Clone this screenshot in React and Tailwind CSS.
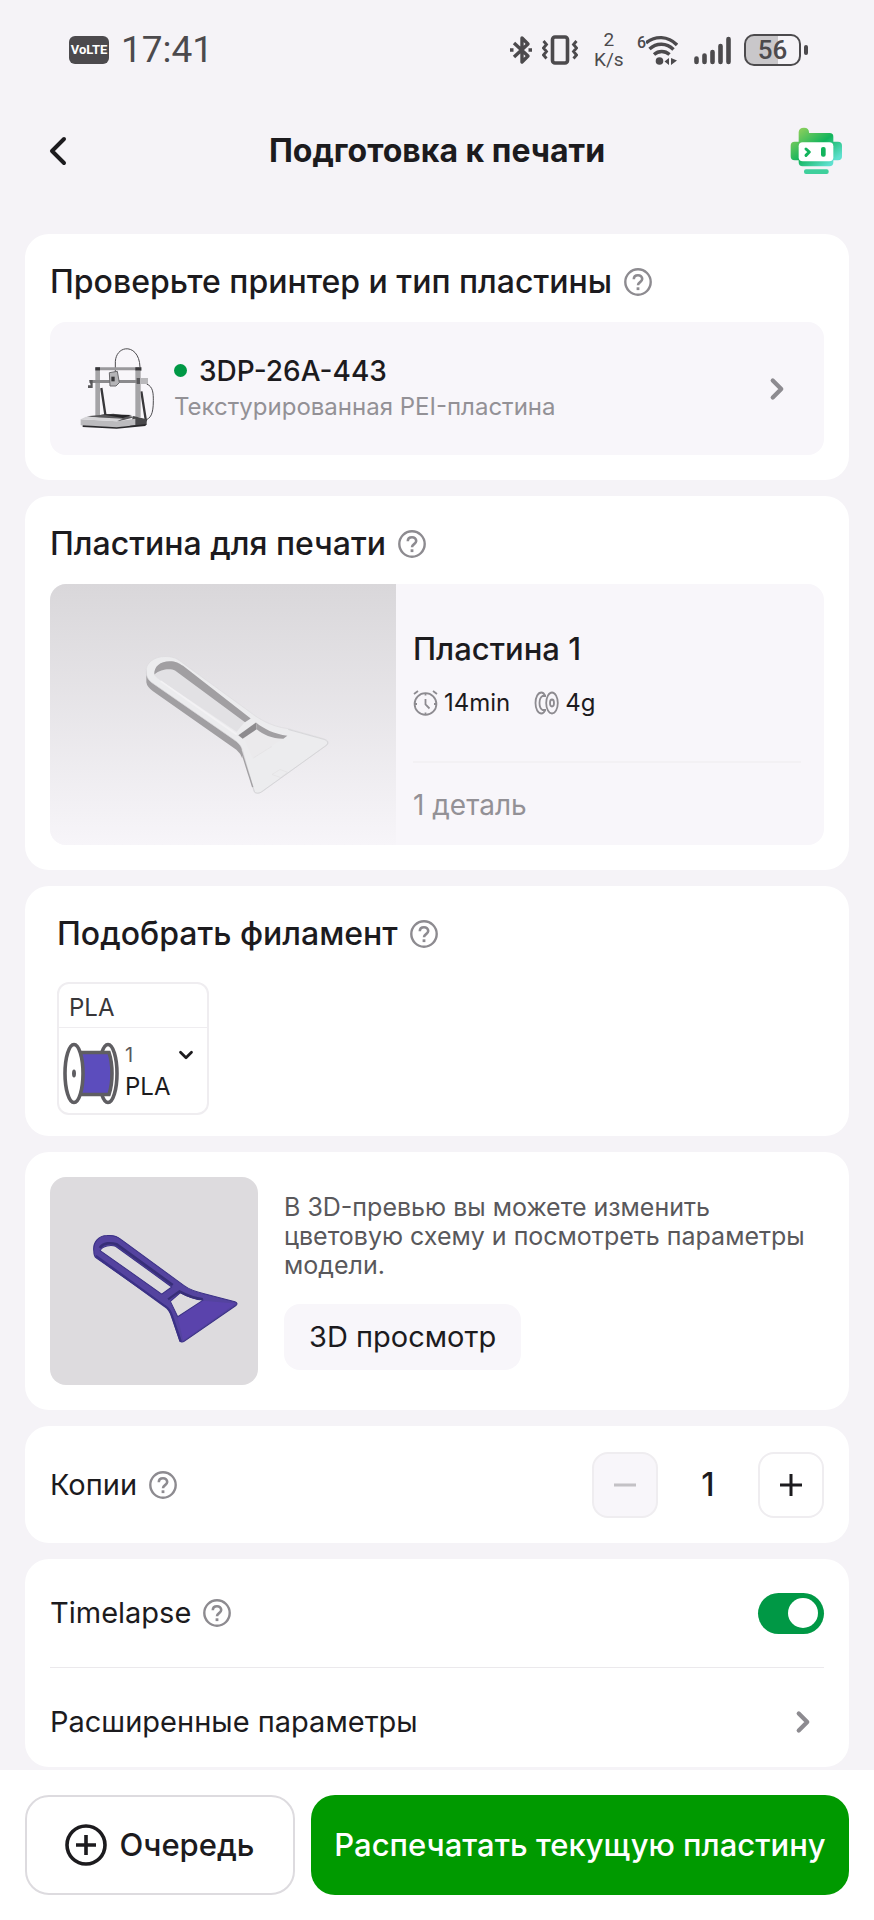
import React, { useState } from 'react';
import { ChevronDown, ChevronLeft, ChevronRight } from 'lucide-react';

function HelpButton({ topic }) {
    return (
        <button aria-label={`Справка: ${topic}`} className="shrink-0">
            <svg width="28" height="28" viewBox="0 0 28 28" fill="none" stroke="#8d8b90" strokeWidth="2.400">
                <circle cx="14" cy="14" r="12.700" />
                <path d="M9.800 11.200c0-2.600 1.900-4 4.200-4s4.200 1.500 4.200 3.800c0 3-4.200 3.200-4.200 6.200" strokeWidth="2.600" />
                <rect x="12.600" y="19.300" width="2.800" height="2.800" fill="#8d8b90" stroke="none" />
            </svg>
        </button>
    );
}

function Card({ className = '', children }) {
    return <section className={`rounded-3xl bg-white px-[25px] ${className}`}>{children}</section>;
}

function CardTitle({ children }) {
    return (
        <div className="flex items-center gap-3">
            <h2 className="text-[32px] leading-10 font-[450] whitespace-nowrap">{children}</h2>
            <HelpButton topic={children} />
        </div>
    );
}

function StatusBar() {
    return (
        <div className="flex h-[100px] items-center justify-between pr-[66px] pl-[69px] text-[#4c4a4d]">
            <div className="flex items-center gap-3">
                <span className="flex h-7 w-10 items-center justify-center rounded-md bg-[#4c4a4d] font-[Roboto] text-[13px] font-bold text-white">
                    VoLTE
                </span>
                <span className="font-[Roboto] text-[37px] leading-10">17:41</span>
            </div>
            <div className="flex items-center">
                <svg width="22" height="30" viewBox="0 0 22 30" fill="none" stroke="currentColor" strokeWidth="3.400" strokeLinejoin="round">
                    <path d="M4 8l14 13-6 6V3l6 6L4 22" />
                    <path d="M0 15h3.500M18.500 15H22" />
                </svg>
                <svg className="ml-[10px]" width="36" height="30" viewBox="0 0 36 30" fill="none" stroke="currentColor">
                    <rect x="10.500" y="2" width="15" height="26" rx="2.500" strokeWidth="3.600" />
                    <path d="M1.500 6l3 3.500-3 3.500 3 3.500-3 3.500 3 3.500M34.500 6l-3 3.500 3 3.500-3 3.500 3 3.500-3 3.500" strokeWidth="2.800" />
                </svg>
                <span className="ml-[15px] flex w-8 flex-col text-center font-[Roboto] text-[19px] leading-5">
                    <span>2</span>
                    <span>K/s</span>
                </span>
                <div className="ml-3 flex items-start">
                    <span className="font-[Roboto] text-base leading-4 font-medium">6</span>
                    <svg width="32" height="30" viewBox="0 0 32 30" fill="none" stroke="currentColor" strokeWidth="3.400">
                        <path d="M0 8c9-7.500 22-7.500 31 2M3.500 14c7-6.500 17-6.500 24 .5M8 19.500c4.500-4 11-4 15.500 0" />
                        <circle cx="13.500" cy="26" r="3.800" fill="currentColor" stroke="none" />
                        <path d="M23 23v7l-4.500-3.500zM25 23v7l6-4.500z" fill="currentColor" stroke="none" />
                    </svg>
                </div>
                <svg className="ml-4" width="38" height="30" viewBox="0 0 38 30" stroke="currentColor" strokeWidth="4.600" strokeLinecap="round">
                    <path d="M2.500 23.500V27M10.500 20.500V27M18.500 17V27M26.500 11V27M34.500 4V27" />
                </svg>
                <div className="ml-3 flex items-center gap-[3px]">
                    <span className="flex h-8 w-[57px] items-center justify-center rounded-[10px] border-2 border-[#4c4a4d] bg-linear-to-r from-[#c9c7ca] from-60% to-transparent to-60% font-[Roboto] text-[26px] leading-7 font-medium">
                        56
                    </span>
                    <span className="h-[10px] w-1 rounded-xs bg-[#4c4a4d]"></span>
                </div>
            </div>
        </div>
    );
}

function RobotIcon() {
    return (
        <svg width="52" height="48" viewBox="0 0 156 144">
            <defs>
                <linearGradient id="robot" x1="0" y1="0" x2="1" y2="1">
                    <stop offset="0.100" stopColor="#8ccf5c" />
                    <stop offset="0.500" stopColor="#12b45c" />
                    <stop offset="0.850" stopColor="#5fe0cf" />
                </linearGradient>
            </defs>
            <path
                fill="url(#robot)"
                d="M26 16q0-14 16-14 15 0 15 14v2h62q11 0 11 11v15h14q12 0 12 12v32q0 12-12 12h-14v6q0 12-12 12H38q-12 0-12-12v-6H14q-12 0-12-12V56q0-12 12-12h12z"
            />
            <rect x="26" y="46" width="104" height="57" rx="12" fill="#fff" />
            <path d="M48 66l10 9-10 10" fill="none" stroke="#12b45c" strokeWidth="9" strokeLinecap="round" strokeLinejoin="round" />
            <rect x="93" y="60" width="14" height="29" rx="6" fill="#12b45c" />
            <rect x="42" y="127" width="74" height="14" rx="6" fill="#3fcf9c" />
        </svg>
    );
}

function PrinterImage() {
    return (
        <svg className="shrink-0" width="74" height="81" viewBox="0 0 222 243" fill="none">
            <path d="M106 75V40C110-12 178-14 180 58" stroke="#4c4b4e" strokeWidth="3" />
            <path d="M200 108c20 8 20 30 20 50 0 40-8 54-26 59" stroke="#4c4b4e" strokeWidth="3" />
            <path d="M64 120l12 80M184 130l14 90" stroke="#38373a" strokeWidth="7" />
            <path d="M46 58h138v9H46z" fill="#9a999c" />
            <path d="M46 58h14v10H46zM166 58h18v10h-18z" fill="#38373a" />
            <path d="M46 68h14v136H46zM166 68h16v140h-16z" fill="#a5a4a7" />
            <path d="M28 96h154v9H28z" fill="#8b8a8d" />
            <path d="M28 96h10v24H24v-8h8zM170 90h34v18h-34z" fill="#59585b" />
            <path d="M180 90h24v18h-24z" fill="#b9b8bb" />
            <path d="M88 74l24-4 6 34-10 10H90z" fill="#b5b4b7" stroke="#6a696c" strokeWidth="3" />
            <path d="M94 86h10v14H94z" fill="#38373a" />
            <path d="M20 205l80-8 66 10-46 12z" fill="#58575a" />
            <path d="M60 198l96 3-28 9z" fill="#252427" />
            <path d="M160 204l40 10v16l-52 6z" fill="#49484b" />
            <path d="M2 214l108 6 56-8v19l-56 8-108-7z" fill="#bcbbbe" />
            <path d="M2 214l16-8 110 6-18 8z" fill="#d6d5d8" />
            <path d="M8 232l102 6 90-10-4 6-86 8-102-5z" fill="#29282b" />
        </svg>
    );
}

// Unpainted model: light top face, darker extruded walls
function PlatePreview() {
    return (
        <svg className="block h-full w-full" viewBox="0 0 1038 780">
            <path
                d="M289 255v38q2 14 20 27l250 176q12 10 18 26l-2-44L310 290z"
                fill="#a19fa2"
            />
            <path
                d="M289 262c-4-26 24-46 56-46 26 0 36 6 54 20l203 148c20 16 60 42 110 48l110 31c14 5 14 12 8 18L636 622c-10 6-20 6-24 0l-34-124c-6-18-14-24-28-34L305 294c-12-10-16-18-16-32z"
                fill="#ececee"
                stroke="#dcdbde"
                strokeWidth="2"
            />
            <path d="M313 272c-2-24 18-42 46-42 18 0 28 6 40 14l203 158-17 10-25 30-237-160z" fill="#e2e1e4" />
            <path d="M313 270c-2-24 18-40 46-40 18 0 28 6 40 14l203 158-17 11-210-155c-12-6-42-6-62 12z" fill="#a19fa2" />
            <path d="M332 290l228 160" stroke="#f3f2f4" strokeWidth="5" />
            <path d="M565 452l53-38c24 20 54 34 94 40l-104 68-23-54z" fill="#ebeaec" />
            <path d="M565 452l53-38 2 20-42 29z" fill="#8d8b8e" />
            <path d="M618 414c24 20 54 34 94 40l-12 9c-36-2-60-12-80-29z" fill="#a19fa2" />
            <path d="M611 520l54-34M666 570l24-15 22 8-20 16z" stroke="#e2e1e3" strokeWidth="2" fill="none" />
            <path d="M576 498l37 122c2 6 12 8 20 3l196-140c8-6 4-14-6-18l-108-30" stroke="#cfced1" strokeWidth="2" fill="none" />
            <path d="M574 500l34 108" stroke="#a19fa2" strokeWidth="4" />
        </svg>
    );
}

function ModelPreview() {
    return (
        <svg className="block h-full w-full" viewBox="0 0 622 622">
            <path
                fillRule="evenodd"
                fill="#54439f"
                stroke="#3b3186"
                strokeWidth="3"
                strokeLinejoin="round"
                d="M131 222c-4-26 14-47 40-47 18-2 30 2 42 12l188 138c16 12 38 19 60 24l92 24c8 3 8 8 2 12L402 491c-6 4-12 3-14-2l-24-72c-4-14-8-22-16-28L138 242c-5-4-7-10-7-20zM150 220l184 130 30-21-168-122c-14-4-38-2-46 13zM360 372l22 46 76-50c-26-2-46-10-68-22z"
            />
            <path d="M137 236l206 150c14 8 20 22 24 36l24 70" fill="none" stroke="#3b3186" strokeWidth="7" />
            <path d="M149 212c10-16 34-16 50-11l168 122" fill="none" stroke="#372e78" strokeWidth="8" />
            <path d="M353 366l34-24c22 12 44 21 70 23" fill="none" stroke="#372e78" strokeWidth="7" />
            <path d="M382 421l76-51 97 8-157 111z" fill="#5a43ac" />
        </svg>
    );
}

function ClockIcon() {
    return (
        <svg width="25" height="26" viewBox="0 0 25 26" fill="none" stroke="#8d8b90" strokeWidth="1.800">
            <circle cx="12.500" cy="14" r="10.900" />
            <path d="M12.500 9v5.500l4 4M1 4l4-3M24 4l-4-3M12.500 3v2.500M12.500 22.500V25M1.500 14H4M21 14h2.500" />
        </svg>
    );
}

function SpoolOutlineIcon() {
    return (
        <svg width="25" height="24" viewBox="0 0 25 24" fill="none" stroke="#8d8b90" strokeWidth="1.800">
            <path d="M11 4.500C10 2.500 8.800 1.500 7.500 1.500 4 1.500 1.500 6 1.500 12s2.500 10.500 6 10.500c1.300 0 2.500-1 3.500-3" />
            <path d="M12 5H8.500C6 6.500 5.500 9 5.500 12s.5 5.500 3 7H12" />
            <ellipse cx="18" cy="12" rx="5.800" ry="10.500" />
            <ellipse cx="18" cy="12" rx="2" ry="3.500" />
        </svg>
    );
}

function FilamentSpool() {
    return (
        <svg className="shrink-0" width="56" height="63" viewBox="0 0 56 63" stroke="#5f5e62" strokeWidth="3.600">
            <ellipse cx="45" cy="31.500" rx="9" ry="29" fill="#fff" />
            <path d="M16 10.500h30c4 12 4 30 0 42H16z" fill="#5c4dbd" />
            <ellipse cx="11" cy="31.500" rx="9" ry="29" fill="#fff" />
            <ellipse cx="11" cy="31.500" rx="2" ry="4" fill="#5f5e62" stroke="none" />
        </svg>
    );
}

export default function App() {
    const [copies, setCopies] = useState(1);
    const [timelapse, setTimelapse] = useState(true);

    return (
        <div className="flex min-h-screen flex-col bg-[#f5f3f7] font-[Inter,'Noto_Sans',sans-serif] text-[#1c1b1e]">
            <StatusBar />

            <header className="grid h-[102px] grid-cols-[52px_1fr_52px] items-center px-8">
                <button aria-label="Назад" className="flex justify-center">
                    <ChevronLeft size={48} strokeWidth={2} />
                </button>
                <h1 className="text-center text-[32px] leading-10 font-bold">Подготовка к печати</h1>
                <button aria-label="Помощник">
                    <RobotIcon />
                </button>
            </header>

            <main className="mt-8 flex flex-1 flex-col gap-4 px-[25px]">
                <Card className="pt-7 pb-[25px]">
                    <CardTitle>Проверьте принтер и тип пластины</CardTitle>
                    <button className="mt-5 flex h-[133px] w-full items-center rounded-2xl bg-[#f8f6fa] px-[30px] text-left">
                        <PrinterImage />
                        <span className="ml-5 flex flex-1 flex-col">
                            <span className="flex items-center gap-3 text-[28px] leading-9 font-[450]">
                                <span className="size-[13px] rounded-full bg-[#009845]"></span>
                                3DP-26A-443
                            </span>
                            <span className="text-2xl leading-9 text-[#939196]">Текстурированная PEI-пластина</span>
                        </span>
                        <ChevronRight size={34} strokeWidth={3} color="#8d8b90" />
                    </button>
                </Card>

                <Card className="pt-7 pb-[25px]">
                    <CardTitle>Пластина для печати</CardTitle>
                    <div className="mt-5 flex h-[261px] overflow-hidden rounded-2xl bg-[#f8f6fa]">
                        <div className="w-[346px] bg-linear-to-b from-[#d9d7da] to-[#f7f5f9]">
                            <PlatePreview />
                        </div>
                        <div className="flex flex-1 flex-col pt-[45px] pr-[23px] pl-[17px]">
                            <h3 className="text-[31px] leading-10 font-[450]">Пластина 1</h3>
                            <div className="mt-4 flex items-center gap-6 text-2xl leading-9">
                                <span className="flex items-center gap-[6px]">
                                    <ClockIcon />
                                    14min
                                </span>
                                <span className="flex items-center gap-[6px]">
                                    <SpoolOutlineIcon />
                                    4g
                                </span>
                            </div>
                            <p className="mt-10 border-t-2 border-[#f3f1f4] pt-6 text-[28px] leading-9 text-[#939196]">1 деталь</p>
                        </div>
                    </div>
                </Card>

                <Card className="pt-7 pb-[21px] pl-8">
                    <CardTitle>Подобрать филамент</CardTitle>
                    <div className="mt-7 h-[133px] w-[152px] rounded-xl border-2 border-[#efedf0]">
                        <div className="flex h-11 items-center border-b border-[#efedf0] pt-1 pl-[10px] text-2xl text-[#38373a]">PLA</div>
                        <div className="flex items-center gap-[6px] pt-[13px] pl-1">
                            <FilamentSpool />
                            <label className="flex flex-1 flex-col">
                                <span className="flex h-7 items-center justify-between pr-[10px] text-xl text-[#59585b]">
                                    1
                                    <ChevronDown size={22} strokeWidth={3} color="#1c1b1e" />
                                </span>
                                <select aria-label="Филамент" className="h-9 w-full appearance-none bg-transparent text-2xl">
                                    <option>PLA</option>
                                </select>
                            </label>
                        </div>
                    </div>
                </Card>

                <Card className="flex gap-[26px] py-[25px]">
                    <div className="size-[208px] shrink-0 overflow-hidden rounded-2xl bg-[#dddbde]">
                        <ModelPreview />
                    </div>
                    <div className="flex flex-col items-start pt-4">
                        <p className="text-[25px] leading-[29px] text-[#59585b]">
                            В 3D-превью вы можете изменить цветовую схему и посмотреть параметры модели.
                        </p>
                        <button className="mt-6 h-[66px] rounded-2xl bg-[#f8f6fa] px-[25px] text-[29px]">3D просмотр</button>
                    </div>
                </Card>

                <Card className="flex h-[117px] items-center justify-between">
                    <div className="flex items-center gap-3">
                        <span className="text-[29px] leading-10">Копии</span>
                        <HelpButton topic="Копии" />
                    </div>
                    <div className="flex items-center">
                        <button
                            aria-label="Меньше"
                            disabled={copies <= 1}
                            onClick={() => setCopies(copies - 1)}
                            className="flex size-[66px] items-center justify-center rounded-2xl border-2 border-[#efedf0] disabled:bg-[#f8f6fa] disabled:text-[#c3c1c5]"
                        >
                            <svg width="22" height="22" viewBox="0 0 22 22" stroke="currentColor" strokeWidth="3">
                                <path d="M0 11h22" />
                            </svg>
                        </button>
                        <output className="w-[100px] text-center text-[32px] leading-10 font-medium">{copies}</output>
                        <button
                            aria-label="Больше"
                            onClick={() => setCopies(copies + 1)}
                            className="flex size-[66px] items-center justify-center rounded-2xl border-2 border-[#efedf0]"
                        >
                            <svg width="22" height="22" viewBox="0 0 22 22" stroke="currentColor" strokeWidth="3">
                                <path d="M0 11h22M11 0v22" />
                            </svg>
                        </button>
                    </div>
                </Card>

                <Card>
                    <div className="flex h-[109px] items-center justify-between border-b border-[#ebe9ec]">
                        <div className="flex items-center gap-3">
                            <label htmlFor="timelapse" className="text-[29px] leading-10">
                                Timelapse
                            </label>
                            <HelpButton topic="Timelapse" />
                        </div>
                        <input
                            id="timelapse"
                            type="checkbox"
                            role="switch"
                            checked={timelapse}
                            onChange={(e) => setTimelapse(e.target.checked)}
                            className="flex h-[41px] w-[66px] cursor-pointer appearance-none items-center rounded-full bg-gray-300 px-[6px] before:size-[30px] before:rounded-full before:bg-white checked:justify-end checked:bg-[#009845]"
                        />
                    </div>
                    <button className="flex h-[99px] w-full items-center justify-between pt-2 pr-1 text-left text-[29px] leading-10">
                        Расширенные параметры
                        <ChevronRight size={34} strokeWidth={3} color="#8d8b90" />
                    </button>
                </Card>
            </main>

            <footer className="sticky bottom-0 mt-[2px] flex gap-4 bg-white p-[25px]">
                <button className="flex h-[100px] w-[270px] shrink-0 items-center justify-center gap-3 rounded-3xl border-2 border-[#dddbdf] text-[31px] font-[450]">
                    <svg width="42" height="42" viewBox="0 0 42 42" fill="none" stroke="currentColor">
                        <circle cx="21" cy="21" r="19" strokeWidth="3.600" />
                        <path d="M11 21h20M21 11v20" strokeWidth="3.600" />
                    </svg>
                    Очередь
                </button>
                <button className="h-[100px] flex-1 rounded-3xl bg-[#009a00] text-[31px] font-[450] whitespace-nowrap text-white">
                    Распечатать текущую пластину
                </button>
            </footer>
        </div>
    );
}
